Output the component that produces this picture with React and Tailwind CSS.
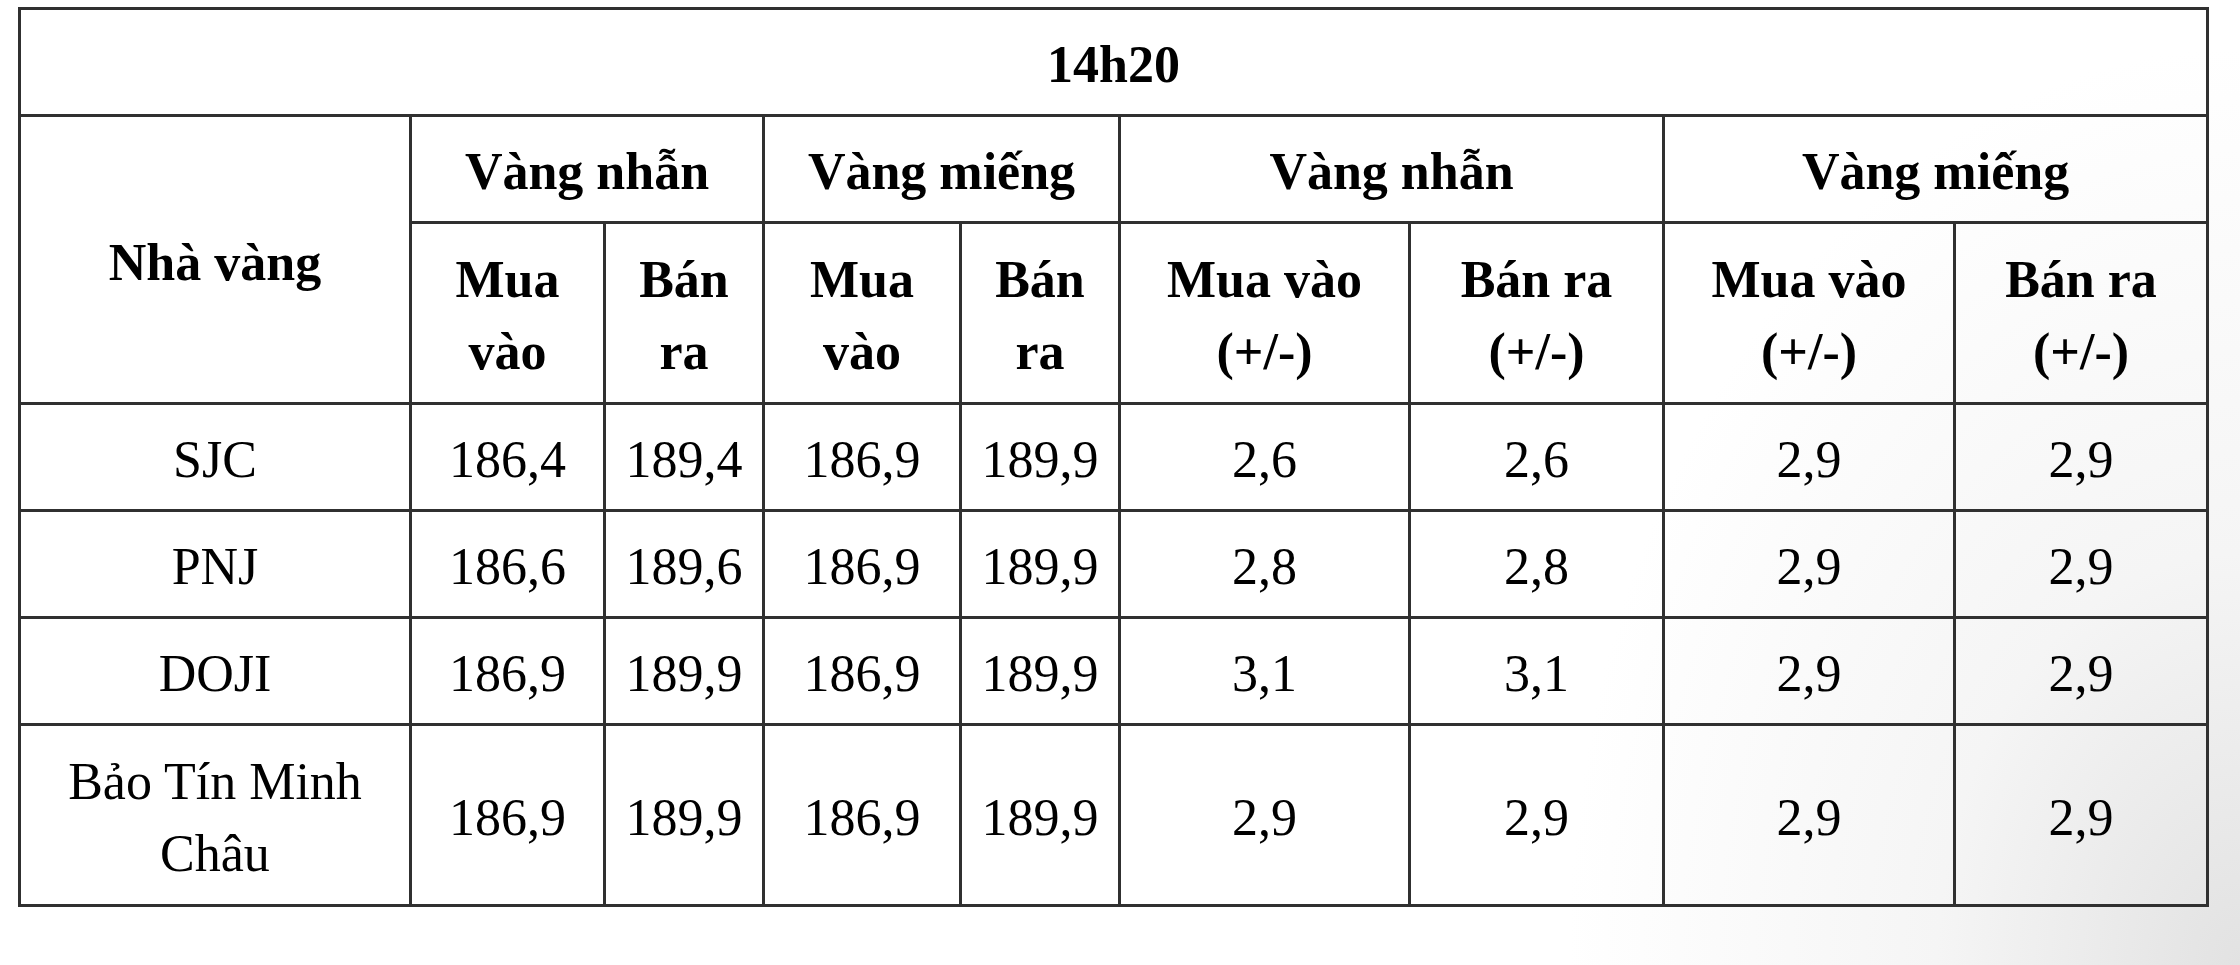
const groups = ['Vàng nhẫn', 'Vàng miếng', 'Vàng nhẫn', 'Vàng miếng'];

const rows = [
  { name: 'SJC', values: ['186,4', '189,4', '186,9', '189,9', '2,6', '2,6', '2,9', '2,9'] },
  { name: 'PNJ', values: ['186,6', '189,6', '186,9', '189,9', '2,8', '2,8', '2,9', '2,9'] },
  { name: 'DOJI', values: ['186,9', '189,9', '186,9', '189,9', '3,1', '3,1', '2,9', '2,9'] },
  { name: 'Bảo Tín Minh Châu', values: ['186,9', '189,9', '186,9', '189,9', '2,9', '2,9', '2,9', '2,9'], tall: true },
];

const widths = [391, 194, 159, 197, 159, 290, 254, 291, 253];

const base = 'border-[3px] border-[#303030] px-2 text-center align-middle';
const cell = `${base} pt-[19px] pb-[13px]`;
const tallCell = `${base} pt-[20px] pb-[14px]`;

const App = () => {
  return (
    <div className="h-[965px] w-full overflow-hidden bg-[radial-gradient(ellipse_30%_95%_at_100%_100%,#e2e2e2_0%,#f5f5f5_45%,#ffffff_100%)] pl-[18px] pt-[7px] font-['Liberation_Serif','Times_New_Roman',serif] text-[52px] leading-[72px] text-black">
      <table className="w-[2191px] table-fixed border-collapse">
        <colgroup>
          {widths.map((w, i) => (
            <col key={i} style={{ width: w }} />
          ))}
        </colgroup>
        <thead className="font-bold">
          <tr>
            <th colSpan={9} className={cell}>14h20</th>
          </tr>
          <tr>
            <th rowSpan={2} className={cell}>Nhà vàng</th>
            {groups.map((g, i) => (
              <th key={i} colSpan={2} className={cell}>{g}</th>
            ))}
          </tr>
          <tr>
            <th className={tallCell}>Mua<br />vào</th>
            <th className={tallCell}>Bán<br />ra</th>
            <th className={tallCell}>Mua<br />vào</th>
            <th className={tallCell}>Bán<br />ra</th>
            <th className={tallCell}>Mua vào<br />(+/-)</th>
            <th className={tallCell}>Bán ra<br />(+/-)</th>
            <th className={tallCell}>Mua vào<br />(+/-)</th>
            <th className={tallCell}>Bán ra<br />(+/-)</th>
          </tr>
        </thead>
        <tbody>
          {rows.map((r) => (
            <tr key={r.name}>
              <td className={r.tall ? tallCell : cell}>{r.tall ? <>Bảo Tín Minh<br />Châu</> : r.name}</td>
              {r.values.map((v, i) => (
                <td key={i} className={r.tall ? tallCell : cell}>{v}</td>
              ))}
            </tr>
          ))}
        </tbody>
      </table>
    </div>
  );
};

export default App;
